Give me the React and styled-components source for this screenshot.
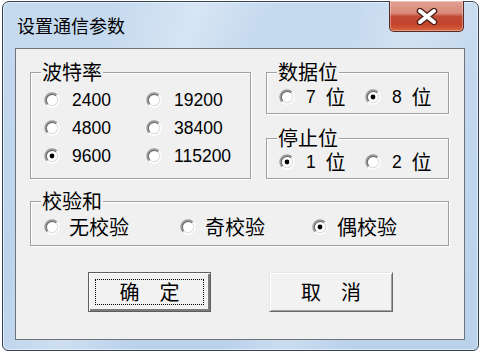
import React, { useState } from 'react';
import styled, { createGlobalStyle, css } from 'styled-components';

const GlobalStyle = createGlobalStyle`
    html, body {
        margin: 0;
        padding: 0;
        background: #ffffff;
    }
    body {
        font-family: "Noto Sans CJK SC", sans-serif;
    }
`;

const Page = styled.div`
    width: 481px;
    height: 354px;
    box-sizing: border-box;
    padding: 1px 2px 0;
`;

const Window = styled.div`
    width: 477px;
    height: 350px;
    box-sizing: border-box;
    display: flex;
    flex-direction: column;
    padding: 0 13px 10px 12px;
    border: 1px solid #34414f;
    border-radius: 7px 7px 6px 6px;
    background:
        linear-gradient(112deg, rgba(255,255,255,0) 18%, rgba(255,255,255,0.3) 32%, rgba(255,255,255,0) 44%, rgba(255,255,255,0) 58%, rgba(255,255,255,0.25) 68%, rgba(255,255,255,0) 80%),
        linear-gradient(180deg, #c6daef 0%, #b9d1eb 100%);
    box-shadow: inset 0 0 0 1px rgba(255, 255, 255, 0.55);
`;

const TitleBar = styled.div`
    height: 46px;
    display: flex;
    align-items: flex-start;
    justify-content: space-between;
`;

const Title = styled.div`
    margin: 12px 0 0 2px;
    font-size: 18px;
    line-height: 22px;
    color: #000;
`;

const CloseButton = styled.div`
    width: 75px;
    height: 31px;
    margin: -1px 1px 0 0;
    box-sizing: border-box;
    display: flex;
    align-items: center;
    justify-content: center;
    border: 1px solid #5a2a24;
    border-top: none;
    border-radius: 0 0 5px 5px;
    background: linear-gradient(180deg, #e2a092 0%, #d98a7b 40%, #c24a35 52%, #c3432b 78%, #d8683f 100%);
    box-shadow: inset 0 0 0 1px rgba(255, 255, 255, 0.35);
`;

const Client = styled.div`
    flex: 1;
    display: flex;
    flex-direction: column;
    padding: 13px 15px 0 14px;
    border: 1px solid #6c737a;
    background: #f0f0f0;
`;

const TopRow = styled.div`
    display: grid;
    grid-template-columns: 221px 183px;
    column-gap: 15px;
`;

const Column = styled.div`
    display: flex;
    flex-direction: column;
    gap: 14px;
`;

const Group = styled.fieldset`
    margin: ${({ $top }) => $top || 0}px 0 0;
    padding: 0;
    min-width: 0;
    border: 1px solid #a0a0a0;
    box-shadow: 1px 1px 0 #ffffff, inset 1px 1px 0 #ffffff;
`;

const Legend = styled.legend`
    margin-left: 10px;
    padding: 0 1px;
    font-size: 20px;
    line-height: 20px;
    color: #000;
    background: #f0f0f0;
`;

const Options = styled.div`
    display: grid;
    grid-template-columns: ${({ $cols }) => $cols};
    grid-auto-rows: 28px;
    padding: ${({ $pad }) => $pad};
`;

const Option = styled.label`
    display: flex;
    align-items: center;
    gap: ${({ $gap }) => $gap}px;
    color: #000;
    line-height: 20px;
    white-space: pre;
    word-spacing: 5px;
    cursor: default;
`;

const OptionText = styled.span`
    display: flex;
    align-items: center;
    height: 20px;
`;

const Num = styled.span`
    font-family: "Liberation Sans", Arial, sans-serif;
    font-size: 17.5px;
    line-height: 20px;
`;

const Cjk = styled.span`
    font-family: "Noto Sans CJK SC", sans-serif;
    font-size: 20px;
    line-height: 20px;
`;

const ButtonRow = styled.div`
    display: flex;
    gap: 58px;
    margin: 26px 0 0 58px;
`;

const Button = styled.button`
    width: ${({ $w }) => $w}px;
    height: 40px;
    box-sizing: border-box;
    display: flex;
    margin: 0;
    padding: 0;
    background: #f2f2f2;
    color: #000;
    font-family: "Noto Sans CJK SC", sans-serif;
    font-size: 20px;
    border: 1px solid;
    border-color: #e8e8e8 #6a6a6a #6a6a6a #e8e8e8;
    box-shadow: inset 1px 1px 0 #ffffff, inset -1px -1px 0 #a0a0a0;

    ${({ $default }) => $default && css`
        border: 1px solid #5e5e5e;
        box-shadow: inset 1px 1px 0 #ffffff, inset -2px -2px 0 #7c7c7c;
    `}
`;

const Caption = styled.span`
    flex: 1;
    margin: 6px;
    display: flex;
    align-items: center;
    justify-content: center;
    line-height: 20px;
    border: 1px dotted ${({ $focus }) => ($focus ? '#000' : 'transparent')};
`;

const CloseGlyph = () => (
    <svg width="24" height="17" viewBox="0 0 24 17">
        <path d="M5 3 L19 14 M19 3 L5 14" stroke="#4a1e18" strokeWidth="6.5" strokeLinecap="round" fill="none" />
        <path d="M5 3 L19 14 M19 3 L5 14" stroke="#ffffff" strokeWidth="4" strokeLinecap="round" fill="none" />
    </svg>
);

// classic sunken radio: dark arcs top-left, light arcs bottom-right
const RadioIcon = ({ checked }) => (
    <svg width="16" height="16" viewBox="0 0 16 16">
        <circle cx="8" cy="8" r="7" fill="#ffffff" />
        <path d="M3.05 12.95 A7 7 0 0 1 12.95 3.05" stroke="#9a9a9a" strokeWidth="1.4" fill="none" />
        <path d="M3.9 12.1 A5.8 5.8 0 0 1 12.1 3.9" stroke="#6a6a6a" strokeWidth="1.2" fill="none" />
        <path d="M12.95 3.05 A7 7 0 0 1 3.05 12.95" stroke="#ffffff" strokeWidth="1.4" fill="none" />
        <path d="M12.1 3.9 A5.8 5.8 0 0 1 3.9 12.1" stroke="#dedede" strokeWidth="1.2" fill="none" />
        {checked && <circle cx="8" cy="8" r="2.4" fill="#000" />}
    </svg>
);

const Radio = ({ num, unit, checked, gap, onSelect }) => (
    <Option $gap={gap} onClick={onSelect}>
        <RadioIcon checked={checked} />
        <OptionText>
            {num && <Num>{unit ? `${num} ` : num}</Num>}
            {unit && <Cjk>{unit}</Cjk>}
        </OptionText>
    </Option>
);

const bauds = ['2400', '19200', '4800', '38400', '9600', '115200'];
const parities = ['无校验', '奇校验', '偶校验'];

const App = () => {
    const [baud, setBaud] = useState('9600');
    const [dataBits, setDataBits] = useState('8');
    const [stopBits, setStopBits] = useState('1');
    const [parity, setParity] = useState('偶校验');

    return (
        <Page>
            <GlobalStyle />
            <Window>
                <TitleBar>
                    <Title>设置通信参数</Title>
                    <CloseButton>
                        <CloseGlyph />
                    </CloseButton>
                </TitleBar>
                <Client>
                    <TopRow>
                        <Group>
                            <Legend>波特率</Legend>
                            <Options $cols="102px 102px" $pad="4px 0 8px 13px">
                                {bauds.map((b) => (
                                    <Radio key={b} num={b} gap={12} checked={baud === b} onSelect={() => setBaud(b)} />
                                ))}
                            </Options>
                        </Group>
                        <Column>
                            <Group>
                                <Legend>数据位</Legend>
                                <Options $cols="86px 86px" $pad="1px 0 2px 12px">
                                    {['7', '8'].map((d) => (
                                        <Radio key={d} num={d} unit="位" gap={11} checked={dataBits === d} onSelect={() => setDataBits(d)} />
                                    ))}
                                </Options>
                            </Group>
                            <Group>
                                <Legend>停止位</Legend>
                                <Options $cols="86px 86px" $pad="0 0 2px 12px">
                                    {['1', '2'].map((s) => (
                                        <Radio key={s} num={s} unit="位" gap={11} checked={stopBits === s} onSelect={() => setStopBits(s)} />
                                    ))}
                                </Options>
                            </Group>
                        </Column>
                    </TopRow>
                    <Group $top={12}>
                        <Legend>校验和</Legend>
                        <Options $cols="136px 132px auto" $pad="2px 0 4px 13px">
                            {parities.map((p) => (
                                <Radio key={p} unit={p} gap={9} checked={parity === p} onSelect={() => setParity(p)} />
                            ))}
                        </Options>
                    </Group>
                    <ButtonRow>
                        <Button $w={123} $default>
                            <Caption $focus>确　定</Caption>
                        </Button>
                        <Button $w={124}>
                            <Caption>取　消</Caption>
                        </Button>
                    </ButtonRow>
                </Client>
            </Window>
        </Page>
    );
};

export default App;
